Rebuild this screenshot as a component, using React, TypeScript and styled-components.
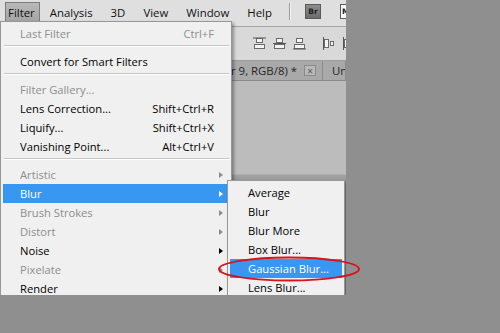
import styled, { createGlobalStyle } from "styled-components";

const GlobalStyle = createGlobalStyle`
  html, body {
    margin: 0;
    padding: 0;
    background: #8f8f8f;
  }
  body {
    font-family: "Open Sans", "Noto Sans", sans-serif;
    font-size: 11.2px;
    color: #000;
  }
`;

const Screen = styled.div`
  position: relative;
  width: 500px;
  height: 333px;
  background: #8f8f8f;
  overflow: hidden;
`;

const AppWindow = styled.div`
  position: relative;
  width: 346px;
  height: 295px;
  display: flex;
  flex-direction: column;
  background: #d8d8d8;
  overflow: hidden;
`;

const MenuBar = styled.div`
  height: 27px;
  box-sizing: border-box;
  display: flex;
  align-items: flex-start;
  gap: 7px;
  padding: 2px 0 0 5px;
  background: #dfdfdf;
  border-bottom: 1px solid #a4a4a4;
`;

const MenuTitle = styled.div<{ $open?: boolean }>`
  flex: none;
  height: 19px;
  box-sizing: border-box;
  display: flex;
  align-items: center;
  padding: 0 ${(p) => (p.$open ? "4px" : "7px")} 0 2px;
  white-space: nowrap;
  color: #111;
  font-size: 11.4px;
  background: ${(p) => (p.$open ? "linear-gradient(#b9b9b9, #a4a4a4)" : "transparent")};
  border: 1px solid ${(p) => (p.$open ? "#7b7b7b" : "transparent")};
  border-bottom: none;
`;

const BarDivider = styled.div`
  flex: none;
  width: 1px;
  height: 17px;
  margin: 1px 0 0 2px;
  background: #9c9c9c;
  box-shadow: 1px 0 0 #f4f4f4;
`;

const AppButton = styled.div<{ $light?: boolean }>`
  flex: none;
  width: 16px;
  height: 15px;
  margin: 2px 0 0 ${(p) => (p.$light ? "12px" : "8px")};
  box-sizing: border-box;
  display: flex;
  align-items: center;
  justify-content: ${(p) => (p.$light ? "flex-start" : "center")};
  padding-left: ${(p) => (p.$light ? "1px" : "0")};
  font-family: "DejaVu Sans", sans-serif;
  font-size: 7.5px;
  font-weight: bold;
  color: ${(p) => (p.$light ? "#222" : "#1c1c1c")};
  background: ${(p) =>
    p.$light ? "#fafafa" : "linear-gradient(#8d8d8d, #6c6c6c)"};
  border: 1px solid #5a5a5a;
`;

const OptionsBar = styled.div`
  height: 34px;
  box-sizing: border-box;
  display: flex;
  align-items: center;
  padding-left: 239px;
  background: #d9d9d9;
  border-bottom: 1px solid #9d9d9d;
`;

const ToolSeparator = styled.div`
  width: 1px;
  height: 25px;
  background: #a3a3a3;
  box-shadow: 1px 0 0 #f2f2f2;
  margin-right: 13px;
`;

const AlignIcon = styled.svg<{ $gap?: number }>`
  flex: none;
  width: 15px;
  height: 15px;
  margin-right: ${(p) => p.$gap ?? 5}px;
`;

const TabBar = styled.div`
  height: 20px;
  box-sizing: border-box;
  display: flex;
  align-items: stretch;
  background: #a9a9a9;
  border-bottom: 1px solid #8a8a8a;
`;

const DocTab = styled.div<{ $width?: number }>`
  ${(p) => (p.$width ? `width: ${p.$width}px;` : "flex: 1;")}
  flex-shrink: 0;
  box-sizing: border-box;
  display: flex;
  align-items: center;
  justify-content: ${(p) => (p.$width ? "flex-end" : "flex-start")};
  gap: 7px;
  padding: 0 6px 0 9px;
  overflow: hidden;
  white-space: nowrap;
  color: #262626;
  font-size: 11.4px;
  border-right: 1px solid #8c8c8c;
`;

const CloseBox = styled.div`
  flex: none;
  width: 12px;
  height: 11px;
  box-sizing: border-box;
  display: flex;
  align-items: center;
  justify-content: center;
  font-size: 10px;
  line-height: 1;
  color: #555;
  background: #b9b9b9;
  border: 1px solid #8a8a8a;
`;

const Canvas = styled.div`
  flex: 1;
  background: linear-gradient(
    #bcbcbc 0,
    #bcbcbc 93px,
    #a3a3a3 94px,
    #9a9a9a 99px,
    #8f8f8f 100px
  );
`;

const Menu = styled.div<{ $left: number; $top: number; $width: number }>`
  position: absolute;
  left: ${(p) => p.$left}px;
  top: ${(p) => p.$top}px;
  width: ${(p) => p.$width}px;
  box-sizing: border-box;
  padding: 2px;
  background: #f0f0f0;
  border: 1px solid #979797;
  box-shadow: 2px 2px 3px rgba(0, 0, 0, 0.35);
  z-index: 2;
`;

const Row = styled.div<{ $active?: boolean; $disabled?: boolean; $indent?: number }>`
  position: relative;
  height: 19px;
  display: flex;
  align-items: center;
  padding-left: ${(p) => p.$indent ?? 17}px;
  white-space: nowrap;
  font-size: 11.2px;
  color: ${(p) => (p.$active ? "#fff" : p.$disabled ? "#8d8d8d" : "#000")};
  background: ${(p) => (p.$active ? "#3897f0" : "transparent")};
`;

const Label = styled.span`
  flex: 1;
`;

const Shortcut = styled.span`
  flex: none;
`;

const ArrowSlot = styled.span`
  flex: none;
  width: 15px;
  height: 19px;
  display: flex;
  align-items: center;
  padding-left: 5px;
  box-sizing: border-box;
`;

const Arrow = styled.span<{ $color: string }>`
  width: 0;
  height: 0;
  border-top: 3.5px solid transparent;
  border-bottom: 3.5px solid transparent;
  border-left: 4px solid ${(p) => p.$color};
`;

const Separator = styled.div`
  height: 9px;
  box-sizing: border-box;
  padding: 2px 0 0 1px;

  &::before {
    content: "";
    display: block;
    height: 1px;
    background: #c5c5c5;
    border-bottom: 1px solid #ffffff;
  }
`;

const Annotation = styled.svg`
  position: absolute;
  left: 216px;
  top: 254px;
  width: 146px;
  height: 30px;
  z-index: 5;
  overflow: visible;
`;

type Item =
  | { sep: true }
  | {
      sep?: false;
      label: string;
      shortcut?: string;
      sub?: boolean;
      disabled?: boolean;
      active?: boolean;
    };

const filterItems: Item[] = [
  { label: "Last Filter", shortcut: "Ctrl+F", disabled: true },
  { sep: true },
  { label: "Convert for Smart Filters" },
  { sep: true },
  { label: "Filter Gallery...", disabled: true },
  { label: "Lens Correction...", shortcut: "Shift+Ctrl+R" },
  { label: "Liquify...", shortcut: "Shift+Ctrl+X" },
  { label: "Vanishing Point...", shortcut: "Alt+Ctrl+V" },
  { sep: true },
  { label: "Artistic", sub: true, disabled: true },
  { label: "Blur", sub: true, active: true },
  { label: "Brush Strokes", sub: true, disabled: true },
  { label: "Distort", sub: true, disabled: true },
  { label: "Noise", sub: true },
  { label: "Pixelate", sub: true, disabled: true },
  { label: "Render", sub: true },
];

const blurItems = [
  "Average",
  "Blur",
  "Blur More",
  "Box Blur...",
  "Gaussian Blur...",
  "Lens Blur...",
];

const AlignGlyph = ({ line, gap }: { line: number; gap?: number }) => (
  <AlignIcon viewBox="0 0 15 15" $gap={gap}>
    <rect x="4.5" y="2.5" width="6" height="4" fill="#f4f4f4" stroke="#6a6a6a" />
    <rect x="2.5" y="8.5" width="10" height="4" fill="#f4f4f4" stroke="#6a6a6a" />
    <line x1="1" y1={line} x2="14" y2={line} stroke="#555" />
  </AlignIcon>
);

const VAlignGlyph = ({ gap }: { gap?: number }) => (
  <AlignIcon viewBox="0 0 15 15" $gap={gap}>
    <line x1="2.5" y1="1" x2="2.5" y2="14" stroke="#555" />
    <rect x="3.5" y="3.5" width="4" height="8" fill="#f4f4f4" stroke="#6a6a6a" />
    <rect x="9.5" y="5.5" width="3" height="4" fill="#f4f4f4" stroke="#6a6a6a" />
  </AlignIcon>
);

export default function App() {
  return (
    <>
      <GlobalStyle />
      <Screen>
        <AppWindow>
          <MenuBar>
            <MenuTitle $open>Filter</MenuTitle>
            <MenuTitle>Analysis</MenuTitle>
            <MenuTitle>3D</MenuTitle>
            <MenuTitle>View</MenuTitle>
            <MenuTitle>Window</MenuTitle>
            <MenuTitle>Help</MenuTitle>
            <BarDivider />
            <AppButton>Br</AppButton>
            <AppButton $light>Mb</AppButton>
          </MenuBar>

          <OptionsBar>
            <ToolSeparator />
            <AlignGlyph line={2} />
            <AlignGlyph line={7.5} />
            <AlignGlyph line={13} gap={14} />
            <VAlignGlyph gap={5} />
            <VAlignGlyph />
          </OptionsBar>

          <TabBar>
            <DocTab $width={323}>
              Untitled-1 @ 100% (Layer 9, RGB/8) *
              <CloseBox>×</CloseBox>
            </DocTab>
            <DocTab>Untitled-2</DocTab>
          </TabBar>

          <Canvas />

          <Menu $left={0} $top={21} $width={232}>
            {filterItems.map((item, i) =>
              item.sep ? (
                <Separator key={i} />
              ) : (
                <Row key={i} $active={item.active} $disabled={item.disabled}>
                  <Label>{item.label}</Label>
                  {item.shortcut && <Shortcut>{item.shortcut}</Shortcut>}
                  <ArrowSlot>
                    {item.sub && (
                      <Arrow
                        $color={
                          item.active ? "#fff" : item.disabled ? "#8d8d8d" : "#000"
                        }
                      />
                    )}
                  </ArrowSlot>
                </Row>
              )
            )}
          </Menu>

          <Menu $left={227} $top={180} $width={118}>
            {blurItems.map((label) => (
              <Row key={label} $indent={18} $active={label === "Gaussian Blur..."}>
                <Label>{label}</Label>
              </Row>
            ))}
          </Menu>
        </AppWindow>

        <Annotation viewBox="0 0 146 30">
          <ellipse
            cx="73"
            cy="15"
            rx="70"
            ry="11.5"
            fill="none"
            stroke="#d7141c"
            strokeWidth="2"
          />
        </Annotation>
      </Screen>
    </>
  );
}
